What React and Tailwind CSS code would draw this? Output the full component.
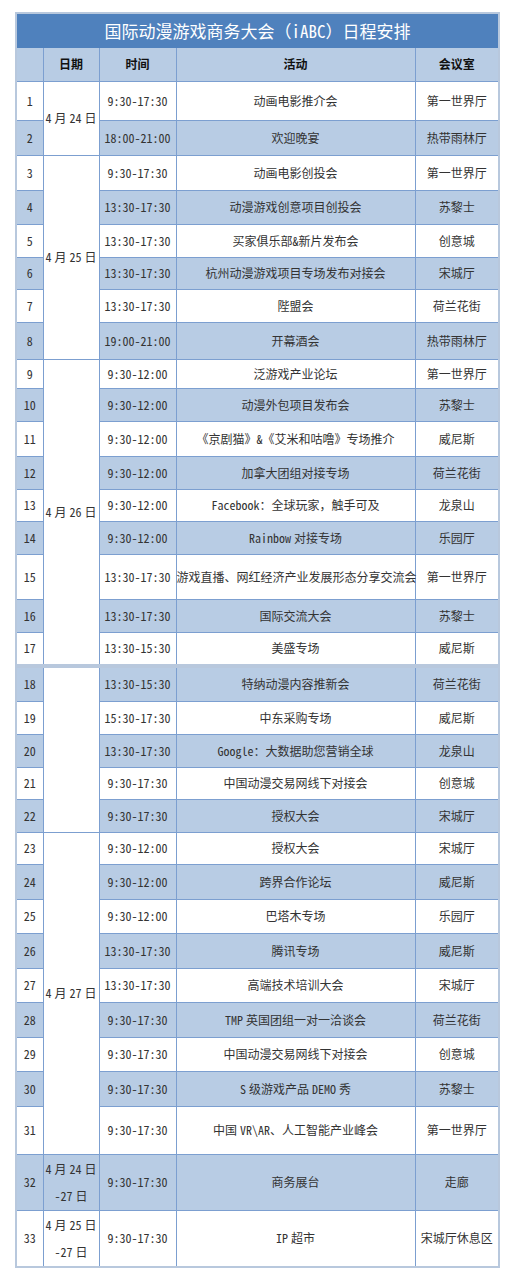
import React from 'react';

const part1 = [
  [1, '9:30-17:30', '动画电影推介会', '第一世界厅', 'h-[39px]'],
  [2, '18:00-21:00', '欢迎晚宴', '热带雨林厅', 'h-[35px]'],
  [3, '9:30-17:30', '动画电影创投会', '第一世界厅', 'h-[35px]'],
  [4, '13:30-17:30', '动漫游戏创意项目创投会', '苏黎士', 'h-[34px]'],
  [5, '13:30-17:30', '买家俱乐部&新片发布会', '创意城', 'h-[33px]'],
  [6, '13:30-17:30', '杭州动漫游戏项目专场发布对接会', '宋城厅', 'h-[32px]'],
  [7, '13:30-17:30', '陛盟会', '荷兰花街', 'h-[33px]'],
  [8, '19:00-21:00', '开幕酒会', '热带雨林厅', 'h-[37px]'],
  [9, '9:30-12:00', '泛游戏产业论坛', '第一世界厅', 'h-[29px]'],
  [10, '9:30-12:00', '动漫外包项目发布会', '苏黎士', 'h-[33px]'],
  [11, '9:30-12:00', '《京剧猫》&《艾米和咕噜》专场推介', '威尼斯', 'h-[35px]'],
  [12, '9:30-12:00', '加拿大团组对接专场', '荷兰花街', 'h-[33px]'],
  [13, '9:30-12:00', 'Facebook：全球玩家，触手可及', '龙泉山', 'h-[32px]'],
  [14, '9:30-12:00', 'Rainbow 对接专场', '乐园厅', 'h-[33px]'],
  [15, '13:30-17:30', '游戏直播、网红经济产业发展形态分享交流会', '第一世界厅', 'h-[45px]'],
  [16, '13:30-17:30', '国际交流大会', '苏黎士', 'h-[33px]'],
  [17, '13:30-15:30', '美盛专场', '威尼斯', 'h-[32px]'],
];

const part2 = [
  [18, '13:30-15:30', '特纳动漫内容推新会', '荷兰花街', 'h-[33px]'],
  [19, '15:30-17:30', '中东采购专场', '威尼斯', 'h-[33px]'],
  [20, '13:30-17:30', 'Google：大数据助您营销全球', '龙泉山', 'h-[33px]'],
  [21, '9:30-17:30', '中国动漫交易网线下对接会', '创意城', 'h-[32px]'],
  [22, '9:30-17:30', '授权大会', '宋城厅', 'h-[33px]'],
  [23, '9:30-12:00', '授权大会', '宋城厅', 'h-[32px]'],
  [24, '9:30-12:00', '跨界合作论坛', '威尼斯', 'h-[35px]'],
  [25, '9:30-12:00', '巴塔木专场', '乐园厅', 'h-[34px]'],
  [26, '13:30-17:30', '腾讯专场', '威尼斯', 'h-[35px]'],
  [27, '13:30-17:30', '高端技术培训大会', '宋城厅', 'h-[34px]'],
  [28, '9:30-17:30', 'TMP 英国团组一对一洽谈会', '荷兰花街', 'h-[35px]'],
  [29, '9:30-17:30', '中国动漫交易网线下对接会', '创意城', 'h-[34px]'],
  [30, '9:30-17:30', 'S 级游戏产品 DEMO 秀', '苏黎士', 'h-[35px]'],
  [31, '9:30-17:30', '中国 VR\\AR、人工智能产业峰会', '第一世界厅', 'h-[48px]'],
  [32, '9:30-17:30', '商务展台', '走廊', 'h-[56px]'],
  [33, '9:30-17:30', 'IP 超市', '宋城厅休息区', 'h-[56px]'],
];

// first row of each merged date cell
const dates = {
  1: { text: ['4 月 24 日'], span: 2 },
  3: { text: ['4 月 25 日'], span: 6 },
  9: { text: ['4 月 26 日'], span: 9 },
  18: { text: [], span: 5 },
  23: { text: ['4 月 27 日'], span: 9 },
  32: { text: ['4 月 24 日', '-27 日'], span: 1 },
  33: { text: ['4 月 25 日', '-27 日'], span: 1 },
};

const cell = 'border border-[#7c9fd0] p-0 text-center align-middle whitespace-nowrap';

const Cols = () => (
  <colgroup>
    <col className="w-[26px]" />
    <col className="w-[56px]" />
    <col className="w-[77px]" />
    <col className="w-[239px]" />
    <col className="w-[83px]" />
  </colgroup>
);

const Rows = ({ rows }) =>
  rows.map(([no, time, act, room, h]) => {
    const blue = no % 2 === 0;
    const bg = blue ? 'bg-[#b8cce4]' : 'bg-white';
    const d = dates[no];
    return (
      <tr key={no} className={bg}>
        <td className={`${cell} ${h}`}>{no}</td>
        {d && (
          <td
            rowSpan={d.span}
            className={`${cell} ${d.span === 1 ? bg : 'bg-white'} ${d.text.length > 1 ? 'leading-[27px]' : ''}`}
          >
            {d.text.map((t) => (
              <div key={t}>{t}</div>
            ))}
          </td>
        )}
        <td className={cell}>{time}</td>
        <td className={`${cell} overflow-visible`}>{act}</td>
        <td className={cell}>{room}</td>
      </tr>
    );
  });

const App = () => {
  return (
    <div className="bg-white min-h-[1280px] pt-[12px] pl-[15px] text-[12px] leading-[16px] text-[#333] [word-spacing:-3px] font-['Noto_Sans_Mono_CJK_SC','Noto_Sans_CJK_SC',sans-serif]">
      <div className="w-[485px] border-2 border-[#b8c8dd]">
        <div className="h-[34px] bg-[#4f81bd] text-white text-[17px] leading-[34px] text-center">
          国际动漫游戏商务大会（iABC）日程安排
        </div>
        <table className="w-full table-fixed border-collapse border-hidden">
          <Cols />
          <tbody>
            <tr className="bg-[#b8cce4] font-bold text-[#111]">
              <td className={`${cell} h-[33px]`}></td>
              <td className={cell}>日期</td>
              <td className={cell}>时间</td>
              <td className={cell}>活动</td>
              <td className={cell}>会议室</td>
            </tr>
            <Rows rows={part1} />
          </tbody>
        </table>
      </div>
      <div className="w-[485px] border-2 border-[#b8c8dd]">
        <table className="w-full table-fixed border-collapse border-hidden">
          <Cols />
          <tbody>
            <Rows rows={part2} />
          </tbody>
        </table>
      </div>
    </div>
  );
};

export default App;
